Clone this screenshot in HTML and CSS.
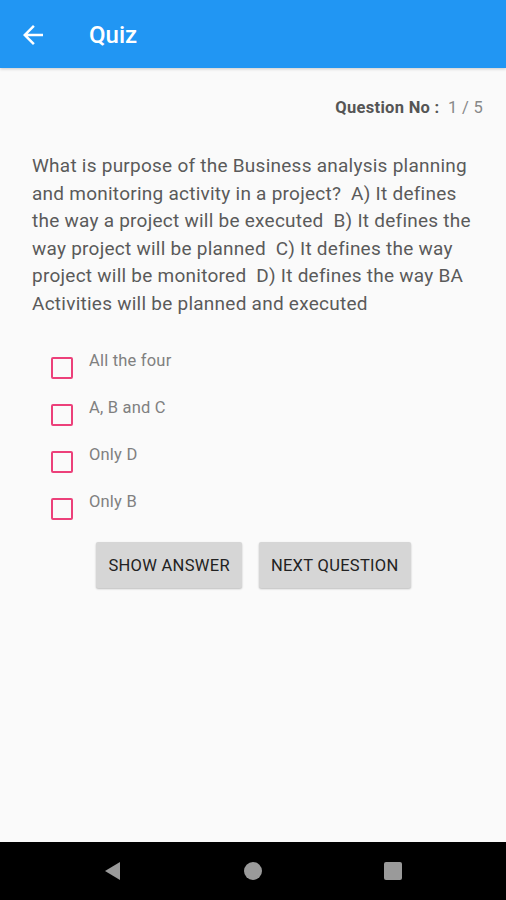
FILE: index.html
```html
<!DOCTYPE html>
<html lang="en">
<head>
    <meta charset="UTF-8">
    <meta name="viewport" content="width=device-width, initial-scale=1.0">
    <title>Quiz</title>
    <link rel="stylesheet" href="styles.css">
</head>
<body>
    <header class="app-bar">
        <svg class="back" width="30" height="30" viewBox="0 0 24 24"><path d="M20 11H7.83l5.59-5.59L12 4l-8 8 8 8 1.41-1.41L7.83 13H20v-2z" fill="#fff"/></svg>
        <h1>Quiz</h1>
    </header>
    <main class="content">
        <p class="counter"><b>Question No :</b> 1 / 5</p>
        <p class="question">What is purpose of the Business analysis planning and monitoring activity in a project? &nbsp;A) It defines the way a project will be executed &nbsp;B) It defines the way project will be planned &nbsp;C) It defines the way project will be monitored &nbsp;D) It defines the way BA Activities will be planned and executed</p>
        <ul class="options">
            <li><span class="box"></span><span>All the four</span></li>
            <li><span class="box"></span><span>A, B and C</span></li>
            <li><span class="box"></span><span>Only D</span></li>
            <li><span class="box"></span><span>Only B</span></li>
        </ul>
        <div class="actions">
            <button>SHOW ANSWER</button>
            <button>NEXT QUESTION</button>
        </div>
    </main>
    <nav class="sys-nav">
        <svg width="20" height="20" viewBox="0 0 20 20"><path d="M17 1 L17 19 L2 10 Z" fill="#9a9a9a"/></svg>
        <svg width="20" height="20" viewBox="0 0 20 20"><circle cx="10" cy="10" r="9" fill="#9a9a9a"/></svg>
        <svg width="20" height="20" viewBox="0 0 20 20"><rect x="1" y="1" width="18" height="18" rx="2" fill="#9a9a9a"/></svg>
    </nav>
</body>
</html>
```
FILE: styles.css
```css
body {
    margin: 0;
    height: 900px;
    display: flex;
    flex-direction: column;
    background: #fafafa;
    font-family: Roboto, 'Liberation Sans', sans-serif;
}
.app-bar {
    height: 68px;
    flex-shrink: 0;
    background: #2196f3;
    display: flex;
    align-items: center;
    padding: 2px 0 0 18px;
    box-sizing: border-box;
    box-shadow: 0 1px 3px rgba(0, 0, 0, 0.2);
}
.app-bar h1 {
    margin: 0 0 0 41px;
    color: #fff;
    font-size: 24px;
    font-weight: 500;
}
.content {
    flex: 1;
    padding: 0 23px 0 32px;
}
.counter {
    margin: 30px 0 0;
    text-align: right;
    font-size: 16.5px;
    letter-spacing: 0.3px;
    color: #888;
}
.counter b {
    color: #555;
    font-weight: 700;
    margin-right: 4px;
}
.question {
    margin: 35px 0 0;
    font-size: 19px;
    letter-spacing: 0.25px;
    line-height: 27.5px;
    color: #5a5a5a;
}
.options {
    list-style: none;
    margin: 34px 0 0;
    padding: 0 0 0 19px;
}
.options li {
    display: flex;
    height: 47px;
    font-size: 16.5px;
    letter-spacing: 0.2px;
    color: #808080;
}
.box {
    flex-shrink: 0;
    width: 18px;
    height: 18px;
    border: 2px solid #e91e63;
    border-radius: 2px;
    margin: 6px 16px 0 0;
    opacity: 0.85;
}
.actions {
    display: flex;
    justify-content: center;
    gap: 17px;
    margin-top: 3px;
    padding-right: 8px;
}
button {
    height: 46px;
    padding: 0 12px;
    background: #d6d6d6;
    border: none;
    border-radius: 2px;
    box-shadow: 0 1px 2px rgba(0, 0, 0, 0.25);
    font-family: inherit;
    font-size: 16.5px;
    font-weight: 400;
    letter-spacing: 0.3px;
    color: #222;
}
.sys-nav {
    height: 58px;
    flex-shrink: 0;
    background: #000;
    display: flex;
    justify-content: center;
    align-items: center;
    gap: 120px;
}
```
